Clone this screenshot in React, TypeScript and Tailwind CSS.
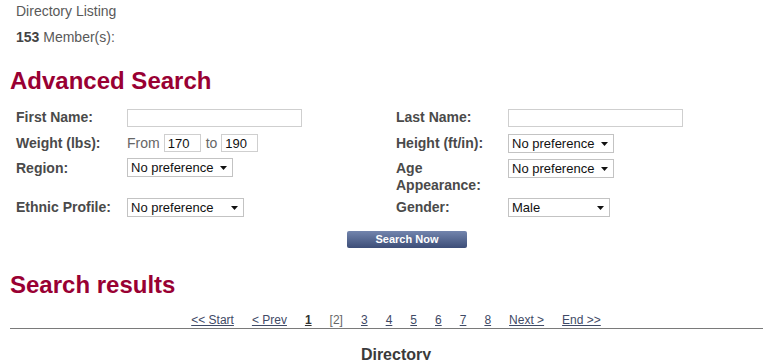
import React from "react";

const Arrow = () => (
  <svg width="7" height="4" viewBox="0 0 7 4" className="shrink-0">
    <path d="M0 0H7L3.5 4Z" fill="#111" />
  </svg>
);

function Select({ value, w }: { value: string; w: string }) {
  return (
    <div
      className={`${w} h-[19px] border border-[#c3c3c3] bg-white flex items-center justify-between pl-[3px] pr-[5px] text-[13px] text-[#111] leading-none`}
    >
      <span>{value}</span>
      <Arrow />
    </div>
  );
}

function TextInput({ w, value }: { w: string; value?: string }) {
  return (
    <div
      className={`${w} h-[18px] border border-[#cfcfcf] bg-white flex items-center pl-[3px] text-[13px] text-[#111] leading-none`}
    >
      {value}
    </div>
  );
}

function Label({ children }: { children: React.ReactNode }) {
  return (
    <div className="w-[111px] shrink-0 pt-[2px] text-[14px] leading-[17px] font-bold text-[#4a4a4a]">
      {children}
    </div>
  );
}

function RLabel({ children }: { children: React.ReactNode }) {
  return (
    <div className="w-[112px] shrink-0 pt-[2px] text-[14px] leading-[17px] font-bold text-[#4a4a4a]">
      {children}
    </div>
  );
}

export default function App() {
  const pages = ["3", "4", "5", "6", "7", "8"];
  return (
    <div
      className="w-[763px] h-[360px] overflow-hidden bg-white"
      style={{ fontFamily: '"Liberation Sans", Arial, sans-serif' }}
    >
      <div className="w-[772px] ml-[10px]">
        <div className="pl-[6px] text-[14px] leading-[22px] text-[#595959]">
          Directory Listing
        </div>
        <div className="pl-[6px] mt-[4px] text-[14px] leading-[22px] text-[#595959]">
          <span className="font-bold text-[#444]">153</span> Member(s):
        </div>
        <h1 className="mt-[19px] text-[24px] leading-[28px] font-bold text-[#990033]">
          Advanced Search
        </h1>

        <div className="mt-[12px] pl-[6px] flex flex-col">
          {/* row 1 */}
          <div className="h-[26px] flex items-start">
            <div className="w-[380px] flex items-start shrink-0">
              <Label>First Name:</Label>
              <div className="mt-[2px]">
                <TextInput w="w-[175px]" />
              </div>
            </div>
            <div className="flex items-start">
              <RLabel>Last Name:</RLabel>
              <div className="mt-[2px]">
                <TextInput w="w-[175px]" />
              </div>
            </div>
          </div>
          {/* row 2 */}
          <div className="h-[25px] flex items-start">
            <div className="w-[380px] flex items-start shrink-0">
              <Label>Weight (lbs):</Label>
              <div className="mt-[1px] flex items-center text-[14px] text-[#666] leading-[18px]">
                <span className="mr-[4px]">From</span>
                <TextInput w="w-[37px]" value="170" />
                <span className="ml-[5px] mr-[4px]">to</span>
                <TextInput w="w-[37px]" value="190" />
              </div>
            </div>
            <div className="flex items-start">
              <RLabel>Height (ft/in):</RLabel>
              <div className="mt-[1px]">
                <Select value="No preference" w="w-[106px]" />
              </div>
            </div>
          </div>
          {/* row 3 */}
          <div className="h-[39px] flex items-start">
            <div className="w-[380px] flex items-start shrink-0">
              <Label>Region:</Label>
              <div>
                <Select value="No preference" w="w-[106px]" />
              </div>
            </div>
            <div className="flex items-start">
              <RLabel>
                Age
                <br />
                Appearance:
              </RLabel>
              <div className="mt-[1px]">
                <Select value="No preference" w="w-[106px]" />
              </div>
            </div>
          </div>
          {/* row 4 */}
          <div className="h-[25px] flex items-start">
            <div className="w-[380px] flex items-start shrink-0">
              <Label>Ethnic Profile:</Label>
              <div className="mt-[1px]">
                <Select value="No preference" w="w-[117px]" />
              </div>
            </div>
            <div className="flex items-start">
              <RLabel>Gender:</RLabel>
              <div className="mt-[1px]">
                <Select value="Male" w="w-[102px]" />
              </div>
            </div>
          </div>
        </div>

        <div className="mt-[9px] pl-[337px]">
          <div className="w-[120px] h-[17px] rounded-[2px] bg-gradient-to-b from-[#7385ad] to-[#3d4e78] flex items-center justify-center text-[11px] font-bold text-white leading-none">
            Search Now
          </div>
        </div>

        <h2 className="mt-[23px] text-[24px] leading-[28px] font-bold text-[#990033]">
          Search results
        </h2>

        <div className="mt-[14px] border-b border-[#7a7a7a] h-[16px] flex justify-center gap-[18px] text-[12px] leading-[15px] text-[#3f4a66]">
          <span className="underline">&lt;&lt; Start</span>
          <span className="underline">&lt; Prev</span>
          <span className="underline font-bold text-[#333]">1</span>
          <span className="text-[#666]">[2]</span>
          {pages.map((p) => (
            <span key={p} className="underline">
              {p}
            </span>
          ))}
          <span className="underline">Next &gt;</span>
          <span className="underline">End &gt;&gt;</span>
        </div>

        <div className="mt-[16px] text-center text-[16px] leading-[20px] font-bold text-[#3a3a3a]">
          Directory
        </div>
      </div>
    </div>
  );
}
